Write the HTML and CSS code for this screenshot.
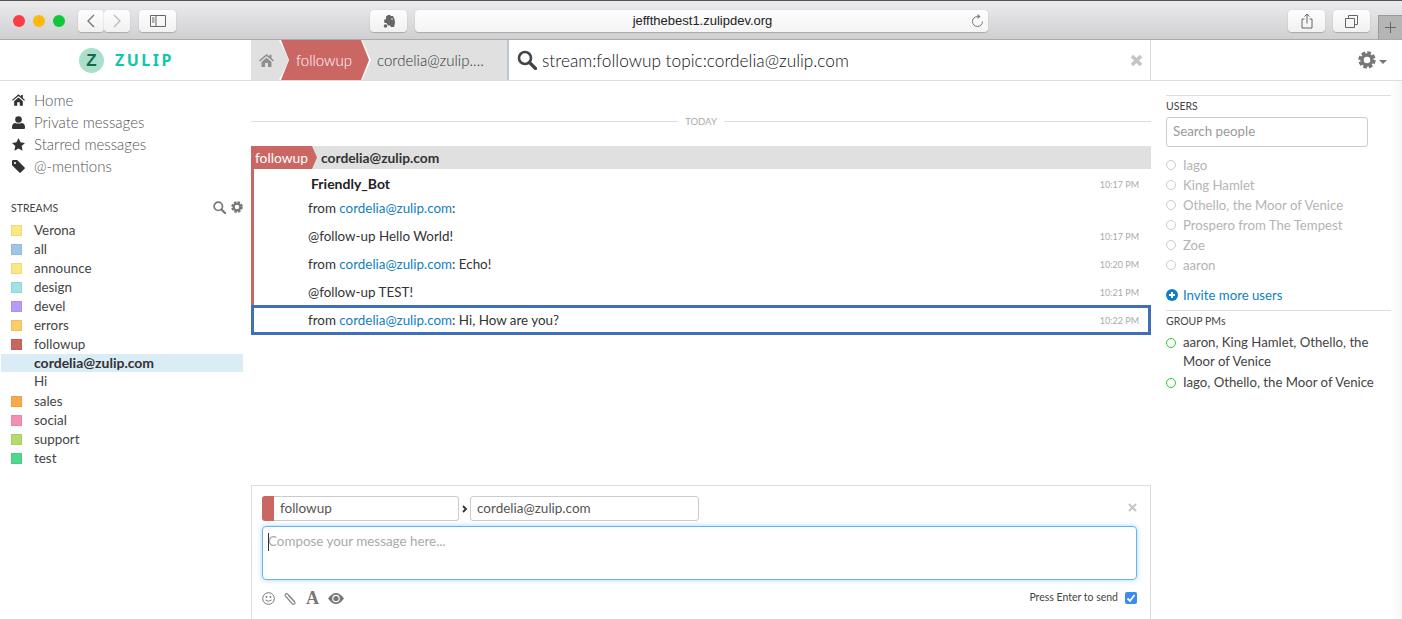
FILE: index.html
```html
<!DOCTYPE html>
<html lang="en">
<head>
    <meta charset="UTF-8">
    <meta name="viewport" content="width=device-width, initial-scale=1.0">
    <title>Zulip</title>
    <link rel="stylesheet" href="styles.css">
</head>
<body>
    <div class="browser-bar">
        <span class="light light-red"></span>
        <span class="light light-yellow"></span>
        <span class="light light-green"></span>
        <div class="btn-pair">
            <div class="btn btn-nav"><svg width="10" height="16" viewBox="0 0 10 16"><path d="M8 2L2 8l6 6" fill="none" stroke="#777" stroke-width="1.4"/></svg></div>
            <div class="btn btn-nav"><svg width="10" height="16" viewBox="0 0 10 16"><path d="M2 2l6 6-6 6" fill="none" stroke="#bbb" stroke-width="1.4"/></svg></div>
        </div>
        <div class="btn btn-sidebar"><svg width="16" height="12" viewBox="0 0 16 12"><path d="M.5.5h15v11H.5zM6 .5v11M2 3h2.500M2 5h2.500M2 7h2.500" fill="none" stroke="#666"/></svg></div>
        <div class="btn btn-note"><svg width="12" height="14" viewBox="0 0 12 14"><path d="M3 2.500L5 1h2l1 1h2l1.500 3 .5 4-1 4H8L7 11.500H5L3.500 9H1.500L1 6l2-1z" fill="#666"/><circle cx="2.500" cy="12" r="1.800" fill="#666"/><path d="M8 5h2" stroke="#eee"/></svg></div>
        <div class="url-bar">
            <span class="url-text">jeffthebest1.zulipdev.org</span>
            <svg class="reload" width="13" height="14" viewBox="0 0 13 14"><path d="M6.500 2.500a5 5 0 1 0 5 5" fill="none" stroke="#777"/><path d="M6.500 0l3 2.500-3 2.500z" fill="#777"/></svg>
        </div>
        <div class="btn btn-share"><svg width="12" height="16" viewBox="0 0 12 16"><path d="M3.500 6H1v9h10V6H8.500M6 10.500V1M3.500 3.500L6 1l2.500 2.500" fill="none" stroke="#666"/></svg></div>
        <div class="btn btn-tabs"><svg width="13" height="13" viewBox="0 0 13 13"><path d="M.5 3.500h9v9h-9zM3.500 3.500v-3h9v9h-3" fill="none" stroke="#666"/></svg></div>
        <div class="new-tab"><svg width="13" height="13" viewBox="0 0 13 13"><path d="M6.500 1v11M1 6.500h11" stroke="#666"/></svg></div>
    </div>

    <div class="app-header">
        <div class="brand">
            <span class="brand-mark">Z</span>
            <span class="brand-name">ZULIP</span>
        </div>
        <div class="crumbs">
            <div class="crumb-home">
                <svg class="icon" width="15" height="13" viewBox="0 0 15 13"><path d="M7.500 0L0 6.500l1 1 6.500-5.500L14 7.500l1-1-2.500-2.200V.8h-2v1.800zM2.500 8v5h3.500V9h3v4h3.500V8l-5-4.300z" fill="#8f8f8f"/></svg>
            </div>
            <div class="crumb-edge"><div class="crumb-stream">followup</div></div>
            <div class="crumb-topic">cordelia@zulip.…</div>
        </div>
        <div class="search-bar">
            <svg width="20" height="20" viewBox="0 0 20 20"><circle cx="8" cy="8" r="6" fill="none" stroke="#444" stroke-width="2.600"/><path d="M12.500 12.500l6 6" stroke="#444" stroke-width="3.200" stroke-linecap="round"/></svg>
            <span class="search-text">stream:followup topic:cordelia@zulip.com</span>
            <svg class="search-close" width="13" height="13" viewBox="0 0 13 13"><path d="M2 2l9 9M11 2l-9 9" stroke="#c4c4c4" stroke-width="3.600"/></svg>
        </div>
        <div class="settings">
            <svg width="18" height="18" viewBox="0 0 18 18"><circle cx="9" cy="9" r="7" fill="none" stroke="#777" stroke-width="3.400" stroke-dasharray="3.600 1.900"/><circle cx="9" cy="9" r="5" fill="none" stroke="#777" stroke-width="3.400"/></svg>
            <span class="caret"></span>
        </div>
    </div>

    <div class="layout">
        <div class="left-sidebar">
            <ul class="global-filters">
                <li><svg width="13" height="12" viewBox="0 0 15 13"><path d="M7.500 0L0 6.500l1 1 6.500-5.500L14 7.500l1-1-2.500-2.200V.8h-2v1.800zM2.500 8v5h3.500V9h3v4h3.500V8l-5-4.300z" fill="#333"/></svg>Home</li>
                <li><svg width="13" height="13" viewBox="0 0 13 13"><circle cx="6.500" cy="3.500" r="3.300" fill="#333"/><path d="M1 13c-1 0-1-1-1-2 0-2.500 1.500-4 3.500-4 1 .8 5 .8 6 0 2 0 3.500 1.500 3.500 4 0 1 0 2-1 2z" fill="#333"/></svg>Private messages</li>
                <li><svg width="13" height="13" viewBox="0 0 13 13"><path d="M6.500 0l2 4.300 4.500.6-3.300 3.100.9 4.700-4.100-2.300-4.100 2.300.9-4.700L0 4.900l4.500-.6z" fill="#333"/></svg>Starred messages</li>
                <li><svg width="13" height="13" viewBox="0 0 13 13"><path d="M0 1.200Q0 0 1.200 0h4L12.600 7.400q.6.700 0 1.300l-3.900 3.900q-.6.600-1.300 0L0 5.200z" fill="#333"/><circle cx="3" cy="3" r="1.100" fill="#fff"/></svg>@-mentions</li>
            </ul>

            <div class="streams-title">
                <span>STREAMS</span>
                <span class="streams-tools">
                    <svg width="13" height="13" viewBox="0 0 13 13"><circle cx="5.300" cy="5.300" r="4.200" fill="none" stroke="#777" stroke-width="1.700"/><path d="M8.500 8.500l3.500 3.500" stroke="#777" stroke-width="2.200" stroke-linecap="round"/></svg>
                    <svg width="12" height="12" viewBox="0 0 18 18"><circle cx="9" cy="9" r="7" fill="none" stroke="#777" stroke-width="3.400" stroke-dasharray="3.600 1.900"/><circle cx="9" cy="9" r="5" fill="none" stroke="#777" stroke-width="3.400"/></svg>
                </span>
            </div>
            <ul class="stream-list">
                <li><span class="swatch swatch-yellow"></span>Verona</li>
                <li><span class="swatch swatch-blue"></span>all</li>
                <li><span class="swatch swatch-yellow"></span>announce</li>
                <li><span class="swatch swatch-cyan"></span>design</li>
                <li><span class="swatch swatch-purple"></span>devel</li>
                <li><span class="swatch swatch-gold"></span>errors</li>
                <li><span class="swatch swatch-red"></span>followup</li>
                <li class="topic active-topic">cordelia@zulip.com</li>
                <li class="topic">Hi</li>
                <li><span class="swatch swatch-orange"></span>sales</li>
                <li><span class="swatch swatch-pink"></span>social</li>
                <li><span class="swatch swatch-green"></span>support</li>
                <li><span class="swatch swatch-mint"></span>test</li>
            </ul>
        </div>

        <div class="middle">
            <div class="date-line"><span>TODAY</span></div>
            <div class="recipient-bar">
                <span class="recipient-stream">followup</span>
                <span class="recipient-topic">cordelia@zulip.com</span>
            </div>
            <div class="messages">
                <div class="sender-row">
                    <span class="sender">Friendly_Bot</span>
                    <span class="time">10:17 PM</span>
                </div>
                <div class="msg"><span>from <a>cordelia@zulip.com</a>:</span></div>
                <div class="msg"><span>@follow-up Hello World!</span><span class="time">10:17 PM</span></div>
                <div class="msg"><span>from <a>cordelia@zulip.com</a>: Echo!</span><span class="time">10:20 PM</span></div>
                <div class="msg"><span>@follow-up TEST!</span><span class="time">10:21 PM</span></div>
            </div>
            <div class="msg msg-selected"><span>from <a>cordelia@zulip.com</a>: Hi, How are you?</span><span class="time">10:22 PM</span></div>

            <div class="compose">
                <div class="compose-head">
                    <span class="compose-color"></span>
                    <div class="field field-stream">followup</div>
                    <svg class="compose-arrow" width="6" height="8" viewBox="0 0 6 8"><path d="M1 1l3 3-3 3" fill="none" stroke="#333" stroke-width="1.800"/></svg>
                    <div class="field field-topic">cordelia@zulip.com</div>
                    <svg class="compose-close" width="9" height="9" viewBox="0 0 9 9"><path d="M1 1l7 7M8 1L1 8" stroke="#c4c4c4" stroke-width="2"/></svg>
                </div>
                <div class="compose-box"><span class="text-caret"></span>Compose your message here...</div>
                <div class="compose-foot">
                    <svg width="13" height="13" viewBox="0 0 13 13"><circle cx="6.500" cy="6.500" r="5.800" fill="none" stroke="#777"/><circle cx="4.500" cy="5" r=".9" fill="#777"/><circle cx="8.500" cy="5" r=".9" fill="#777"/><path d="M3.500 8q3 2.500 6 0" fill="none" stroke="#777"/></svg>
                    <svg width="13" height="13" viewBox="0 0 13 13"><path d="M11 10L4 2.500Q2.800 1 1.600 2t.2 2.500L8 11.500q1.500 1.300 2.500.4t-.2-2.400L4.500 3.500" fill="none" stroke="#888" stroke-width="1.200"/></svg>
                    <span class="font-icon">A</span>
                    <svg width="16" height="11" viewBox="0 0 16 11"><path d="M0 5.500Q4 0 8 0t8 5.500Q12 11 8 11T0 5.500z" fill="#777"/><circle cx="8" cy="5.500" r="3.800" fill="#fff"/><circle cx="8" cy="5.500" r="2.600" fill="#777"/></svg>
                    <span class="enter-label">Press Enter to send</span>
                    <span class="check"><svg width="10" height="9" viewBox="0 0 10 9"><path d="M1.500 4.500L4 7l4.500-6" fill="none" stroke="#fff" stroke-width="1.800"/></svg></span>
                </div>
            </div>
        </div>

        <div class="right-sidebar">
            <h4 class="side-title side-users">USERS</h4>
            <div class="search-people">Search people</div>
            <ul class="user-list">
                <li><span class="dot"></span>Iago</li>
                <li><span class="dot"></span>King Hamlet</li>
                <li><span class="dot"></span>Othello, the Moor of Venice</li>
                <li><span class="dot"></span>Prospero from The Tempest</li>
                <li><span class="dot"></span>Zoe</li>
                <li><span class="dot"></span>aaron</li>
            </ul>
            <div class="invite">
                <svg width="12" height="12" viewBox="0 0 12 12"><circle cx="6" cy="6" r="6" fill="#0f7fc4"/><path d="M6 3v6M3 6h6" stroke="#fff" stroke-width="2"/></svg>
                <a>Invite more users</a>
            </div>
            <h4 class="side-title side-groups">GROUP PMs</h4>
            <ul class="group-list">
                <li><span class="dot dot-on"></span><span>aaron, King Hamlet, Othello, the Moor of Venice</span></li>
                <li><span class="dot dot-on"></span><span>Iago, Othello, the Moor of Venice</span></li>
            </ul>
        </div>
    </div>
</body>
</html>
```

FILE: styles.css
```css
*{
    box-sizing: border-box;
}
html, body{
    margin: 0;
    height: 619px;
    overflow: hidden;
}
body{
    font-family: "Lato", "Noto Sans", sans-serif;
    font-size: 14px;
    color: #333;
    background-color: #fff;
}
ul{
    list-style: none;
    margin: 0;
    padding: 0;
}
a{
    color: #0f7fc4;
}

/* browser chrome */
.browser-bar{
    display: flex;
    align-items: flex-start;
    height: 40px;
    padding: 9px 0 0 13px;
    background: linear-gradient(#ebeaec, #d0cfd1);
    border-top: 1px solid #555;
    border-bottom: 1px solid #aaa;
}
.browser-bar > *{
    flex: none;
}
.light{
    width: 12px;
    height: 12px;
    border-radius: 50%;
    margin: 5px 8px 0 0;
}
.light-red{ background-color: #fc3d44; }
.light-yellow{ background-color: #fdb90c; }
.light-green{ background-color: #0fc83a; }
.btn{
    display: flex;
    align-items: center;
    justify-content: center;
    height: 22px;
    background: linear-gradient(#fdfdfd, #f1f1f1);
    border-radius: 4px;
    box-shadow: 0 1px 1px #aaa, 0 0 1px #bbb;
}
.btn-pair{
    display: flex;
    margin-left: 5px;
}
.btn-nav{
    width: 26px;
}
.btn-sidebar{
    width: 37px;
    margin-left: 9px;
}
.btn-note{
    width: 37px;
    margin-left: 194px;
}
.url-bar{
    position: relative;
    width: 573px;
    height: 22px;
    margin-left: 8px;
    padding-left: 2px;
    text-align: center;
    font-family: "Liberation Sans", sans-serif;
    font-size: 13px;
    line-height: 22px;
    color: #222;
    background: linear-gradient(#fdfdfd, #f4f4f4);
    border-radius: 4px;
    box-shadow: 0 1px 1px #aaa, 0 0 1px #bbb;
}
.reload{
    position: absolute;
    top: 4px;
    right: 4px;
}
.btn-share{
    width: 37px;
    margin-left: 300px;
}
.btn-tabs{
    width: 37px;
    margin-left: 8px;
}
.new-tab{
    display: flex;
    align-items: center;
    justify-content: center;
    width: 24px;
    height: 24px;
    margin: 5px 0 0 8px;
    background-color: #b6b5b6;
    border: 1px solid #9a9a9a;
    border-bottom: 0;
    border-right: 0;
}

/* app header */
.app-header{
    display: flex;
    height: 41px;
    border-bottom: 1px solid #ddd;
}
.brand{
    display: flex;
    align-items: center;
    gap: 11px;
    width: 251px;
    padding-left: 79px;
}
.brand-mark{
    width: 25px;
    height: 25px;
    border-radius: 50%;
    text-align: center;
    font-family: "Liberation Sans", sans-serif;
    font-size: 17px;
    font-weight: bold;
    line-height: 25px;
    color: #14694a;
    background-color: #a9dfcb;
}
.brand-name{
    font-family: "Noto Sans", sans-serif;
    font-size: 16px;
    font-weight: 700;
    letter-spacing: 2.500px;
    color: #10c8a8;
}
.crumbs{
    display: flex;
    align-items: stretch;
    width: 258px;
    background-color: #e0e0e0;
    border-right: 2px solid #b9c7d3;
}
.crumb-home{
    display: flex;
    align-items: center;
    width: 28px;
    padding-left: 8px;
}
.crumb-edge{
    width: 92px;
    padding: 0 2px;
    background-color: #fff;
    clip-path: polygon(0 0, 83px 0, 100% 50%, 83px 100%, 0 100%, 10px 50%);
}
.crumb-stream{
    height: 100%;
    padding-left: 15px;
    font-size: 15px;
    font-weight: 300;
    line-height: 40px;
    color: #fff;
    background-color: #cb6763;
    clip-path: polygon(0 0, 80px 0, 100% 50%, 80px 100%, 0 100%, 8px 50%);
}
.crumb-topic{
    flex: 1;
    padding-left: 6px;
    font-size: 15px;
    font-weight: 300;
    line-height: 40px;
    color: #333;
    white-space: nowrap;
}
.search-bar{
    display: flex;
    align-items: center;
    gap: 5px;
    width: 642px;
    padding: 0 8px;
    border-right: 1px solid #ddd;
}
.search-text{
    flex: 1;
    font-size: 17.300px;
    font-weight: 300;
    color: #111;
}
.search-close{
    margin-right: -1px;
}
.settings{
    display: flex;
    flex: 1;
    align-items: center;
    justify-content: flex-end;
    gap: 3px;
    padding-right: 15px;
}
.caret{
    width: 0;
    height: 0;
    margin-top: 3px;
    border-top: 4px solid #777;
    border-left: 4px solid transparent;
    border-right: 4px solid transparent;
}

/* three columns */
.layout{
    display: flex;
    height: 538px;
}
.left-sidebar{
    width: 251px;
    padding-top: 8px;
}
.global-filters li{
    display: flex;
    align-items: center;
    gap: 9px;
    height: 22px;
    padding-left: 12px;
    font-size: 15px;
    font-weight: 300;
    color: #555;
}
.streams-title{
    display: flex;
    align-items: center;
    justify-content: space-between;
    height: 20px;
    margin: 21px 8px 2px 11px;
    font-size: 10.500px;
    color: #444;
}
.streams-tools{
    display: flex;
    gap: 5px;
    margin-top: -2px;
}
.stream-list li{
    display: flex;
    align-items: center;
    gap: 12px;
    height: 19px;
    margin-right: 8px;
    padding-left: 11px;
    font-size: 13.400px;
    color: #444;
}
.stream-list .topic{
    height: 18px;
    margin-left: 1px;
    padding-left: 33px;
}
.stream-list .active-topic{
    margin-top: 1px;
    padding-bottom: 2px;
    font-size: 14px;
    font-weight: bold;
    color: #333;
    background-color: #daecf5;
}
.stream-list .topic + li:not(.topic){
    margin-top: 1px;
}
.swatch{
    width: 11px;
    height: 11px;
    margin-top: 2px;
    border: 1px solid rgba(0, 0, 0, 0.06);
}
.swatch-yellow{ background-color: #fde783; }
.swatch-blue{ background-color: #9fc6e6; }
.swatch-cyan{ background-color: #a0e2e6; }
.swatch-purple{ background-color: #b69bf9; }
.swatch-gold{ background-color: #f9cf66; }
.swatch-red{ background-color: #c96660; }
.swatch-orange{ background-color: #fca94a; }
.swatch-pink{ background-color: #f58eb4; }
.swatch-green{ background-color: #b4db6c; }
.swatch-mint{ background-color: #4fd88d; }

/* messages */
.middle{
    display: flex;
    flex-direction: column;
    width: 900px;
}
.date-line{
    display: flex;
    align-items: center;
    gap: 7px;
    height: 20px;
    margin-top: 30px;
    font-size: 9.500px;
    color: #aaa;
}
.date-line::before, .date-line::after{
    content: "";
    flex: 1;
    border-top: 1px solid #ddd;
}
.recipient-bar{
    display: flex;
    align-items: center;
    height: 23px;
    margin-top: 15px;
    background-color: #e0e0e0;
}
.recipient-stream{
    width: 66px;
    height: 100%;
    padding-left: 4px;
    font-size: 13.800px;
    line-height: 23px;
    color: #fff;
    background-color: #cb6763;
    clip-path: polygon(0 0, 61px 0, 100% 50%, 61px 100%, 0 100%);
}
.recipient-topic{
    margin-left: 4px;
    font-size: 13.800px;
    font-weight: bold;
    color: #333;
}
.messages{
    border-left: 3px solid #cb6763;
}
.sender-row{
    display: flex;
    align-items: center;
    justify-content: space-between;
    height: 25px;
    padding: 5px 12px 0 57px;
}
.sender{
    margin-top: -2px;
    font-size: 14px;
    font-weight: bold;
    color: #222;
}
.time{
    font-size: 9px;
    color: #aaa;
}
.msg{
    display: flex;
    align-items: center;
    justify-content: space-between;
    height: 28px;
    padding: 0 12px 0 54px;
    font-size: 13.400px;
    color: #333;
}
.msg-selected{
    height: 30px;
    padding: 0 9px 0 54px;
    margin-top: -1px;
    border: 3px solid #3e6fb8;
}

/* compose box */
.compose{
    margin-top: auto;
    height: 134px;
    padding: 10px 13px 0 10px;
    border: 1px solid #ddd;
    border-bottom: 0;
}
.compose-head{
    display: flex;
    align-items: center;
    height: 25px;
}
.compose-color{
    width: 12px;
    height: 25px;
    border-radius: 3px 0 0 3px;
    background-color: #cb6763;
}
.field{
    height: 25px;
    padding-left: 6px;
    font-size: 13.500px;
    line-height: 23px;
    color: #555;
    border: 1px solid #ccc;
    border-radius: 0 3px 3px 0;
}
.field-stream{
    width: 185px;
    border-left: 0;
}
.compose-arrow{
    margin: 0 2px 0 3px;
}
.field-topic{
    width: 229px;
    border-radius: 3px;
}
.compose-close{
    margin: -2px 0 0 auto;
}
.compose-box{
    position: relative;
    height: 54px;
    margin-top: 5px;
    padding: 6px 5px;
    font-size: 13.400px;
    color: #aaa;
    border: 1px solid #66b4ee;
    border-radius: 4px;
    box-shadow: 0 0 5px rgba(82, 168, 236, 0.5);
}
.text-caret{
    position: absolute;
    left: 5px;
    top: 6px;
    height: 18px;
    border-left: 1px solid #333;
}
.compose-foot{
    display: flex;
    align-items: center;
    gap: 9px;
    height: 20px;
    margin-top: 8px;
}
.font-icon{
    font-family: "Liberation Serif", serif;
    font-size: 18px;
    font-weight: bold;
    line-height: 20px;
    color: #777;
}
.enter-label{
    margin: -2px 0 0 auto;
    font-size: 10.500px;
    color: #444;
}
.check{
    display: flex;
    align-items: center;
    justify-content: center;
    width: 12px;
    height: 12px;
    margin-left: -2px;
    border-radius: 2px;
    background-color: #3b8bf2;
}

/* right sidebar */
.right-sidebar{
    flex: 1;
    padding: 14px 11px 0 15px;
    background: linear-gradient(to right, #fff 239px, #f6f6f6);
}
.side-title{
    margin: 0;
    font-size: 10.500px;
    font-weight: normal;
    line-height: 20px;
    color: #444;
    border-top: 1px solid #ddd;
}
.side-users{
    height: 22px;
}
.search-people{
    width: 202px;
    height: 30px;
    padding-left: 6px;
    font-size: 13.300px;
    line-height: 26px;
    color: #999;
    border: 1px solid #ccc;
    border-radius: 3px;
}
.user-list{
    margin-top: 8px;
}
.user-list li{
    display: flex;
    align-items: center;
    gap: 7px;
    height: 20px;
    font-size: 13.200px;
    color: #b4b4b4;
}
.dot{
    flex: none;
    width: 10px;
    height: 10px;
    border: 1px solid #ccc;
    border-radius: 50%;
}
.dot-on{
    margin-top: 5px;
    border: 1.500px solid #2cc92c;
}
.invite{
    display: flex;
    align-items: center;
    gap: 5px;
    height: 20px;
    margin-top: 10px;
    font-size: 13.200px;
}
.side-groups{
    height: 23px;
    margin-top: 5px;
}
.group-list li{
    display: flex;
    gap: 7px;
    margin-bottom: 2px;
    font-size: 13.200px;
    line-height: 19px;
    color: #444;
}
```
